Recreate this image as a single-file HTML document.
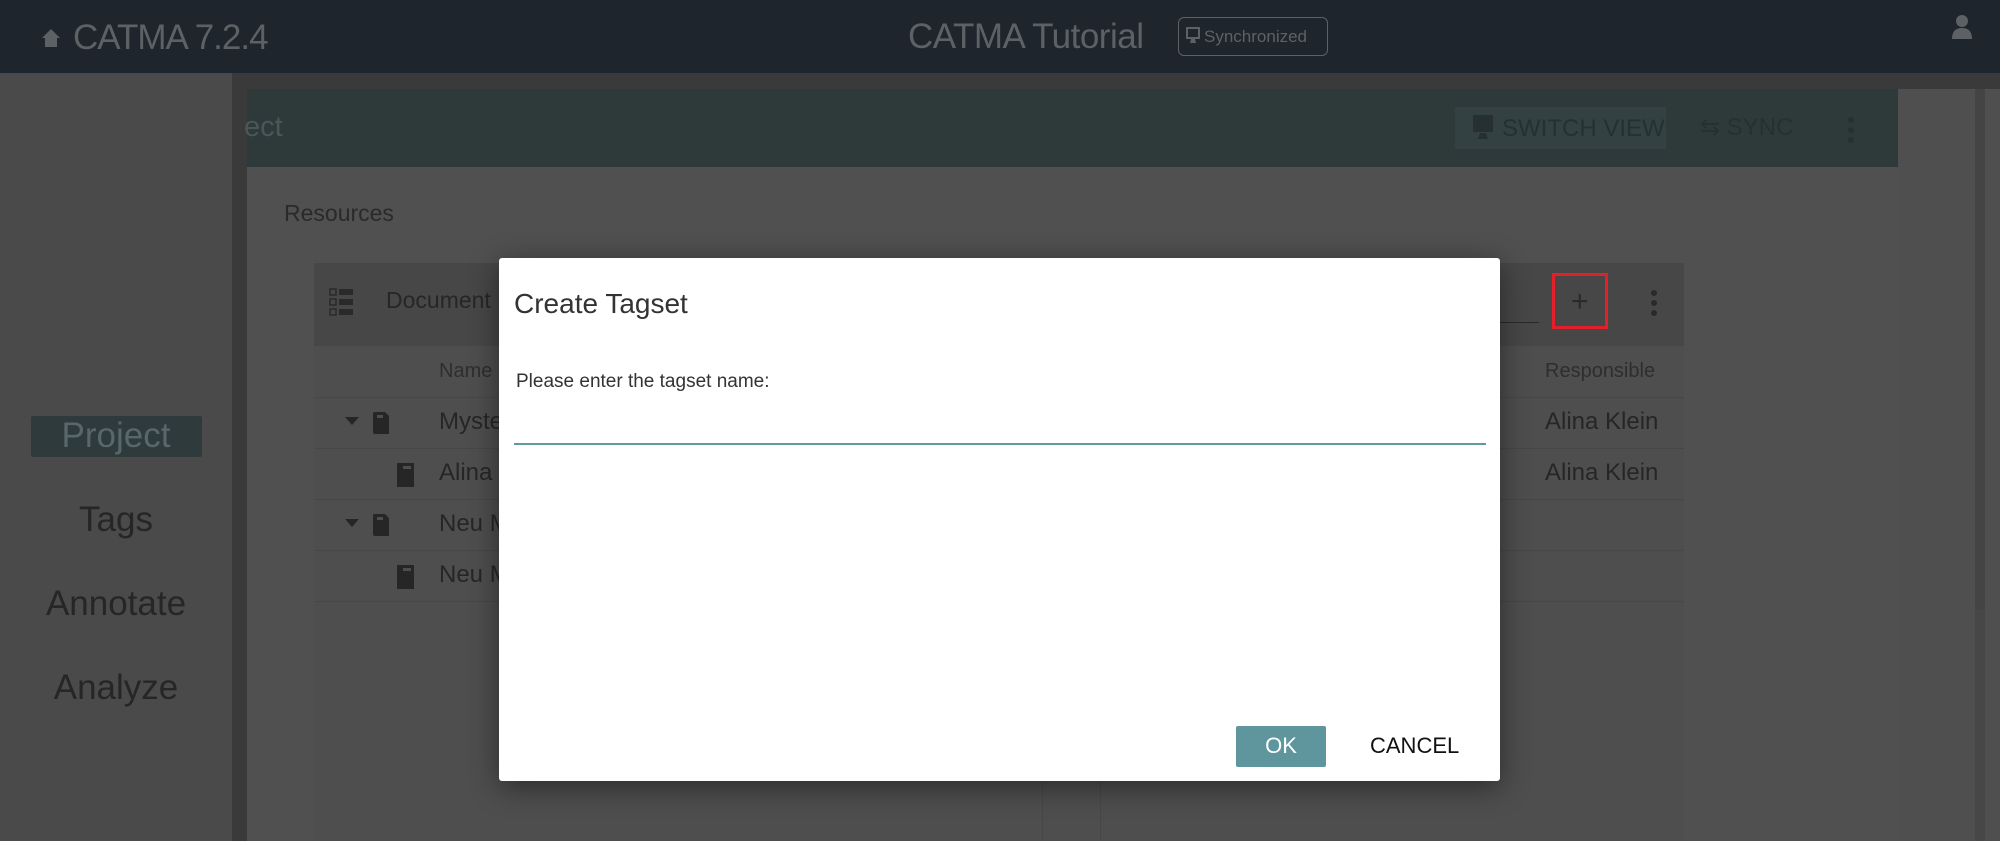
<!DOCTYPE html>
<html><head><meta charset="utf-8"><style>
*{margin:0;padding:0;box-sizing:border-box}
body{width:2000px;height:841px;overflow:hidden;background:#505050;font-family:"Liberation Sans",sans-serif;position:relative}
.a{position:absolute}
.t{position:absolute;white-space:nowrap;line-height:1}
</style></head><body>
<!-- header -->
<div class="a" style="left:0;top:0;width:2000px;height:73px;background:#1f252c"></div>
<svg class="a" style="left:41px;top:28px" width="20" height="20" viewBox="0 0 20 20"><path d="M10 1 L1 10 H4 V19 H16 V10 H19 Z" fill="#5c6166"/></svg>
<div class="t" style="left:73px;top:20px;font-size:35px;color:#5c6166;letter-spacing:-1px">CATMA 7.2.4</div>
<div class="t" style="left:908px;top:19px;font-size:35px;color:#5c6166;letter-spacing:-0.5px">CATMA Tutorial</div>
<div class="a" style="left:1178px;top:17px;width:150px;height:39px;border:1.5px solid #5c6166;border-radius:6px"></div>
<svg class="a" style="left:1186px;top:27px" width="14" height="18" viewBox="0 0 14 18"><rect x="1" y="1" width="12" height="10" fill="none" stroke="#5c6166" stroke-width="2"/><path d="M5 12h4l1 4H4z" fill="#5c6166"/></svg>
<div class="t" style="left:1204px;top:28px;font-size:17px;color:#5c6166">Synchronized</div>
<svg class="a" style="left:1951px;top:14px" width="22" height="26" viewBox="0 0 22 26"><circle cx="11" cy="7" r="6" fill="#5c6166"/><path d="M1 25 Q1 14 11 14 Q21 14 21 25Z" fill="#5c6166"/></svg>
<!-- sidebar -->
<div class="a" style="left:0;top:73px;width:232px;height:768px;background:#4a4a4a"></div>
<div class="a" style="left:232px;top:73px;width:15px;height:768px;background:#3a3a3a"></div>
<div class="a" style="left:247px;top:73px;width:1753px;height:16px;background:#3a3a3a"></div>
<div class="a" style="left:31px;top:416px;width:171px;height:41px;background:#2e3a3c;border-radius:2px"></div>
<div class="t" style="left:0;width:232px;text-align:center;top:418px;font-size:35px;color:#58676a">Project</div>
<div class="t" style="left:0;width:232px;text-align:center;top:502px;font-size:35px;color:#262626">Tags</div>
<div class="t" style="left:0;width:232px;text-align:center;top:586px;font-size:35px;color:#262626">Annotate</div>
<div class="t" style="left:0;width:232px;text-align:center;top:670px;font-size:35px;color:#262626">Analyze</div>
<!-- teal bar -->
<div class="a" style="left:247px;top:89px;width:1651px;height:78px;background:#2e393a"></div>
<div class="t" style="left:244px;top:113px;font-size:29px;color:#4c5658">ect</div>
<div class="a" style="left:1455px;top:107px;width:211px;height:42px;background:#334142"></div>
<svg class="a" style="left:1472px;top:114px" width="22" height="28" viewBox="0 0 22 28"><rect x="1" y="1" width="20" height="17" fill="#263030"/><path d="M8 19h6l2 6H6z" fill="#263030"/></svg>
<div class="t" style="left:1502px;top:117px;font-size:24px;color:#263030">SWITCH VIEW</div>
<div class="t" style="left:1700px;top:116px;font-size:24px;color:#263030">⇆ SYNC</div>
<div class="a" style="left:1848px;top:117px;width:6px;height:6px;border-radius:3px;background:#263030;box-shadow:0 10px 0 #263030,0 20px 0 #263030"></div>
<!-- right area -->
<div class="a" style="left:1898px;top:89px;width:102px;height:752px;background:#4f4f4f"></div>
<div class="a" style="left:1975px;top:89px;width:10px;height:752px;background:#474747"></div>
<div class="a" style="left:1975px;top:89px;width:10px;height:520px;background:#444"></div>
<div class="t" style="left:284px;top:202px;font-size:23px;color:#2a2a2a">Resources</div>
<!-- card -->
<div class="a" style="left:314px;top:263px;width:1370px;height:578px;background:#4e4e4e"></div>
<div class="a" style="left:314px;top:263px;width:1370px;height:83px;background:#474747"></div>
<svg class="a" style="left:329px;top:288px" width="26" height="28" viewBox="0 0 26 28"><g fill="#2a2a2a"><rect x="1" y="1" width="6" height="6" fill="none" stroke="#2a2a2a" stroke-width="1.5"/><rect x="10" y="1" width="14" height="6"/><rect x="1" y="11" width="6" height="6" fill="none" stroke="#2a2a2a" stroke-width="1.5"/><rect x="10" y="11" width="14" height="6"/><rect x="1" y="21" width="6" height="6" fill="none" stroke="#2a2a2a" stroke-width="1.5"/><rect x="10" y="21" width="14" height="6"/></g></svg>
<div class="t" style="left:386px;top:289px;font-size:23px;color:#262626">Document</div>
<div class="a" style="left:1499px;top:322px;width:40px;height:1px;background:#2a2a2a"></div>
<div class="a" style="left:1552px;top:273px;width:56px;height:56px;border:3px solid #e3202a"></div>
<div class="t" style="left:1571px;top:287px;font-size:30px;color:#2a2a2a">+</div>
<div class="a" style="left:1651px;top:290px;width:6px;height:6px;border-radius:3px;background:#2a2a2a;box-shadow:0 10px 0 #2a2a2a,0 20px 0 #2a2a2a"></div>
<div class="a" style="left:314px;top:397px;width:1370px;height:1px;background:#474747"></div>
<div class="a" style="left:314px;top:448px;width:1370px;height:1px;background:#474747"></div>
<div class="a" style="left:314px;top:499px;width:1370px;height:1px;background:#474747"></div>
<div class="a" style="left:314px;top:550px;width:1370px;height:1px;background:#474747"></div>
<div class="a" style="left:314px;top:601px;width:1370px;height:1px;background:#474747"></div>
<div class="a" style="left:1042px;top:601px;width:1px;height:240px;background:#474747"></div>
<div class="a" style="left:1100px;top:601px;width:1px;height:240px;background:#474747"></div>
<div class="t" style="left:439px;top:361px;font-size:20px;color:#2e2e2e">Name</div>
<div class="t" style="left:1545px;top:361px;font-size:20px;color:#2e2e2e">Responsible</div>
<div class="t" style="left:439px;top:410px;font-size:24px;color:#262626">Myste</div>
<div class="t" style="left:439px;top:461px;font-size:24px;color:#262626">Alina</div>
<div class="t" style="left:439px;top:512px;font-size:24px;color:#262626">Neu M</div>
<div class="t" style="left:439px;top:563px;font-size:24px;color:#262626">Neu M</div>
<div class="t" style="left:1545px;top:410px;font-size:24px;color:#262626">Alina Klein</div>
<div class="t" style="left:1545px;top:461px;font-size:24px;color:#262626">Alina Klein</div>
<svg class="a" style="left:345px;top:417px" width="14" height="8"><path d="M0 0h14L7 8z" fill="#262626"/></svg>
<svg class="a" style="left:345px;top:519px" width="14" height="8"><path d="M0 0h14L7 8z" fill="#262626"/></svg>
<svg class="a" style="left:372px;top:411px" width="18" height="24" viewBox="0 0 18 24"><path d="M2 1h11l4 4v18H3a2 2 0 0 1-2-2V2z" fill="#262626"/><rect x="5" y="4" width="6" height="3" fill="#4e4e4e"/></svg>
<svg class="a" style="left:372px;top:513px" width="18" height="24" viewBox="0 0 18 24"><path d="M2 1h11l4 4v18H3a2 2 0 0 1-2-2V2z" fill="#262626"/><rect x="5" y="4" width="6" height="3" fill="#4e4e4e"/></svg>
<svg class="a" style="left:395px;top:463px" width="20" height="24" viewBox="0 0 20 24"><rect x="2" y="0" width="17" height="24" fill="#262626"/><rect x="8" y="3" width="8" height="3" fill="#4e4e4e"/></svg>
<svg class="a" style="left:395px;top:565px" width="20" height="24" viewBox="0 0 20 24"><rect x="2" y="0" width="17" height="24" fill="#262626"/><rect x="8" y="3" width="8" height="3" fill="#4e4e4e"/></svg>
<!-- dialog -->
<div class="a" style="left:499px;top:258px;width:1001px;height:523px;background:#fff;border-radius:3px;box-shadow:0 6px 30px rgba(0,0,0,0.45)"></div>
<div class="t" style="left:514px;top:290px;font-size:28px;color:#333">Create Tagset</div>
<div class="t" style="left:516px;top:372px;font-size:19px;color:#333">Please enter the tagset name:</div>
<div class="a" style="left:514px;top:443px;width:972px;height:2px;background:#5f9aa2"></div>
<div class="a" style="left:1236px;top:726px;width:90px;height:41px;background:#5f969e;border-radius:2px"></div>
<div class="t" style="left:1236px;width:90px;text-align:center;top:735px;font-size:22px;color:#fff">OK</div>
<div class="t" style="left:1370px;top:735px;font-size:22px;color:#111">CANCEL</div>
</body></html>
